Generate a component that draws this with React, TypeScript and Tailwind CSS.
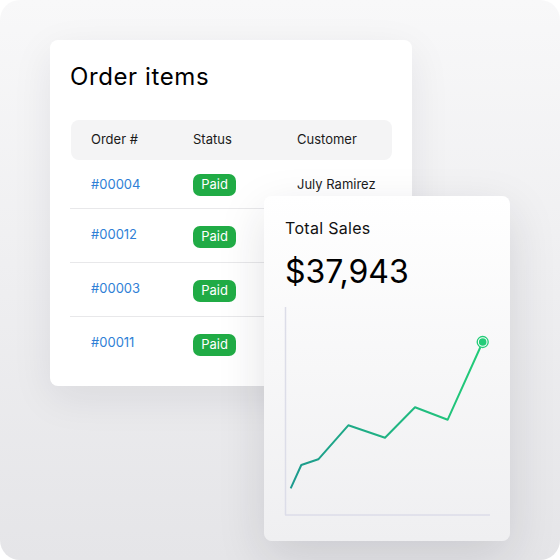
const rows = [
  { id: "#00004", customer: "July Ramirez", h: "h-[49px]" },
  { id: "#00012", customer: "", h: "h-[54px]" },
  { id: "#00003", customer: "", h: "h-[54px]" },
  { id: "#00011", customer: "", h: "h-[53px]" },
];

function OrderCard() {
  return (
    <div className="[grid-area:1/1] ml-[50px] mt-[40px] w-[362px] h-[346px] rounded-[8px] bg-white shadow-[0_12px_40px_rgba(30,30,50,0.08)] px-[20px] pt-[22px]">
      <h2 className="text-[24px] leading-[30px] tracking-[0.6px] text-black">Order items</h2>
      <div className="mt-[28px] ml-[1px] w-[321px] h-[40px] rounded-[8px] bg-[#f4f4f5] flex items-center text-[13px] text-[#1a1a1a]">
        <div className="w-[122px] pl-[20px]">Order #</div>
        <div className="w-[104px]">Status</div>
        <div>Customer</div>
      </div>
      {rows.map((r, i) => (
        <div
          key={r.id}
          className={`flex items-center ${r.h} ${i < 3 ? "border-b border-[#e8e8ea]" : ""} text-[13px]`}
        >
          <div className={`w-[123px] pl-[21px] text-[#2f7fd6] relative ${i > 0 ? "-top-[1px]" : "top-[1px]"}`}>
            {r.id}
          </div>
          <div className="w-[104px]">
            <span className="relative top-[1px] inline-flex items-center justify-center w-[43px] h-[22px] rounded-[7px] bg-[#20ab45] text-white">
              Paid
            </span>
          </div>
          <div className="text-[#1a1a1a] relative top-[1px]">{r.customer}</div>
        </div>
      ))}
    </div>
  );
}

function SalesCard() {
  return (
    <div className="[grid-area:1/1] ml-[264px] mt-[196px] w-[246px] h-[345px] rounded-[8px] bg-gradient-to-b from-white to-[#efeff1] shadow-[0_16px_48px_rgba(30,30,50,0.13)] pl-[21px] pt-[20px]">
      <div className="text-[16px] leading-[24px] tracking-[0.3px] text-[#111]">Total Sales</div>
      <div className="mt-[12px] text-[32px] leading-[40px] text-black">$37,943</div>
      <svg width="210" height="212" className="mt-[14px] -ml-[1px]" viewBox="284 306 210 212">
        <defs>
          <linearGradient id="ln" x1="0" x2="1" y1="0" y2="0">
            <stop offset="0" stopColor="#1d9a8e" />
            <stop offset="1" stopColor="#22cc78" />
          </linearGradient>
        </defs>
        <line x1="285.5" y1="307" x2="285.5" y2="515" stroke="#dcdde8" strokeWidth="1.5" />
        <line x1="285" y1="515" x2="490" y2="515" stroke="#dcdde8" strokeWidth="1.5" />
        <polyline
          points="290.7,488.3 301.3,465 318.3,459.3 348.3,425.3 385,437.7 415,407.3 447.7,419.7 482.7,342"
          fill="none"
          stroke="url(#ln)"
          strokeWidth="2"
          strokeLinejoin="round"
        />
        <circle cx="482.7" cy="342" r="5.5" fill="white" stroke="#22cc78" strokeWidth="1.3" />
        <circle cx="482.7" cy="342" r="3.8" fill="#22cc78" />
      </svg>
    </div>
  );
}

export default function App() {
  return (
    <div className="w-[560px] h-[560px] bg-white" style={{ fontFamily: "Inter, 'Noto Sans', sans-serif" }}>
      <div className="w-full h-full rounded-[20px] bg-gradient-to-b from-[#f8f8f9] to-[#e5e5e8] grid grid-cols-1 grid-rows-1 items-start justify-items-start">
        <OrderCard />
        <SalesCard />
      </div>
    </div>
  );
}
